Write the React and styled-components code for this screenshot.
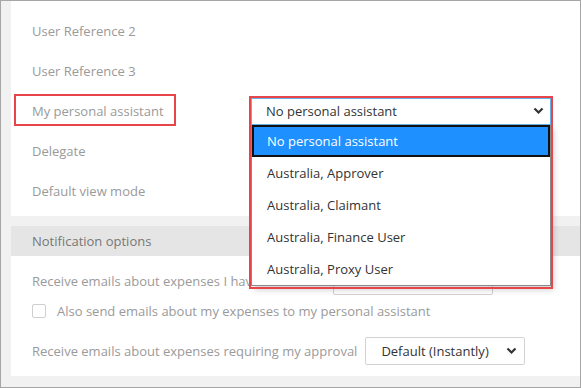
import styled, { createGlobalStyle } from 'styled-components';

const GlobalStyle = createGlobalStyle`
  body {
    margin: 0;
    font-family: 'Open Sans', 'Liberation Sans', sans-serif;
  }
`;

const Chevron = () => (
  <svg width="11" height="8" viewBox="0 0 11 8">
    <path d="M1.5 1.5 L5.5 5.5 L9.5 1.5" fill="none" stroke="#333" strokeWidth="2.2" />
  </svg>
);

const assistants = [
  'No personal assistant',
  'Australia, Approver',
  'Australia, Claimant',
  'Australia, Finance User',
  'Australia, Proxy User',
];

const App = () => {
  return (
    <>
      <GlobalStyle />
      <Frame>
        <Panel $top="0" $bottom="5px">
          <Row><Label>User Reference 2</Label></Row>
          <Row><Label>User Reference 3</Label></Row>
          <Row>
            <Label $marked>My personal assistant</Label>
            <SelectWrap>
              <Select $focused>
                <SelectText>No personal assistant</SelectText>
                <Chevron />
              </Select>
              <Options>
                {assistants.map((a, i) => (
                  <Option key={a} $active={i === 0}>{a}</Option>
                ))}
              </Options>
              <Marker />
            </SelectWrap>
          </Row>
          <Row><Label>Delegate</Label></Row>
          <Row><Label>Default view mode</Label></Row>
        </Panel>

        <Panel $top="0" $bottom="10px">
          <SectionHeader>Notification options</SectionHeader>
          <Body>
            <InlineRow>
              <Label>Receive emails about expenses I have submitted</Label>
              <SmallSelect />
            </InlineRow>
            <InlineRow>
              <Checkbox />
              <CheckLabel>Also send emails about my expenses to my personal assistant</CheckLabel>
            </InlineRow>
            <InlineRow>
              <Label>Receive emails about expenses requiring my approval</Label>
              <SmallSelect>
                <SelectText>Default (Instantly)</SelectText>
                <Chevron />
              </SmallSelect>
            </InlineRow>
          </Body>
        </Panel>
      </Frame>
    </>
  );
};

const Frame = styled.div`
  width: 581px;
  height: 388px;
  box-sizing: border-box;
  border: 1px solid #a6a6a6;
  background: #f1f1f1;
  padding: 0 0 0 10px;
  display: flex;
  flex-direction: column;
  gap: 10px;
  overflow: hidden;
`;

const Panel = styled.div`
  background: #fff;
  padding-top: ${(p) => p.$top};
  padding-bottom: ${(p) => p.$bottom};
  display: flex;
  flex-direction: column;
`;

const Row = styled.div`
  height: 40px;
  display: flex;
  align-items: center;
  padding-left: 21px;
  &:first-child {
    margin-top: 10px;
  }
`;

const Label = styled.span`
  position: relative;
  width: ${(p) => (p.$marked ? '219px' : 'auto')};
  flex-shrink: 0;
  font-size: 13px;
  color: #9a9a9a;
  white-space: nowrap;
  &::after {
    content: '';
    display: ${(p) => (p.$marked ? 'block' : 'none')};
    position: absolute;
    left: -18px;
    width: 162px;
    top: -8px;
    bottom: -6px;
    border: 2px solid #e8454b;
    box-sizing: border-box;
  }
`;

const SelectWrap = styled.div`
  position: relative;
  width: 300px;
  z-index: 2;
`;

const Select = styled.div`
  height: 27px;
  box-sizing: border-box;
  border: 1px solid ${(p) => (p.$focused ? '#66b3ea' : '#d2d2d2')};
  background: #fff;
  display: flex;
  align-items: center;
  justify-content: space-between;
  padding: 0 6px 0 14px;
`;

const SmallSelect = styled(Select)`
  width: 160px;
  height: 28px;
  margin-left: 8px;
  border-radius: 2px;
  padding: 0 7px 0 15px;
`;

const SelectText = styled.span`
  font-size: 13px;
  color: #333;
  white-space: nowrap;
`;

const Options = styled.div`
  position: absolute;
  left: 0;
  top: 27px;
  width: 300px;
  box-sizing: border-box;
  background: #fff;
  border: 1px solid #8a8a8a;
  border-top: none;
  box-shadow: 3px 4px 6px rgba(0, 0, 0, 0.18);
`;

const Option = styled.div`
  height: 32px;
  box-sizing: border-box;
  display: flex;
  align-items: center;
  padding-left: ${(p) => (p.$active ? '13px' : '15px')};
  font-size: 13px;
  color: ${(p) => (p.$active ? '#fff' : '#333')};
  background: ${(p) => (p.$active ? '#1e90ff' : '#fff')};
  border: ${(p) => (p.$active ? '2px solid #111' : 'none')};
`;

const Marker = styled.div`
  position: absolute;
  left: -2px;
  top: -2px;
  width: 304px;
  height: 193px;
  border: 2px solid #e8454b;
  box-sizing: border-box;
  pointer-events: none;
`;

const SectionHeader = styled.div`
  height: 30px;
  background: #e5e5e5;
  display: flex;
  align-items: center;
  padding-left: 21px;
  font-size: 13px;
  color: #777;
`;

const Body = styled.div`
  padding-top: 10px;
  display: flex;
  flex-direction: column;
`;

const InlineRow = styled.div`
  height: 30px;
  display: flex;
  align-items: center;
  padding-left: 21px;
  &:last-child {
    margin-top: 10px;
  }
`;

const Checkbox = styled.span`
  width: 14px;
  height: 14px;
  box-sizing: border-box;
  border: 1px solid #cfcfcf;
  border-radius: 2px;
  flex-shrink: 0;
`;

const CheckLabel = styled.span`
  margin-left: 11px;
  font-size: 13px;
  color: #9a9a9a;
  white-space: nowrap;
`;

export default App;
